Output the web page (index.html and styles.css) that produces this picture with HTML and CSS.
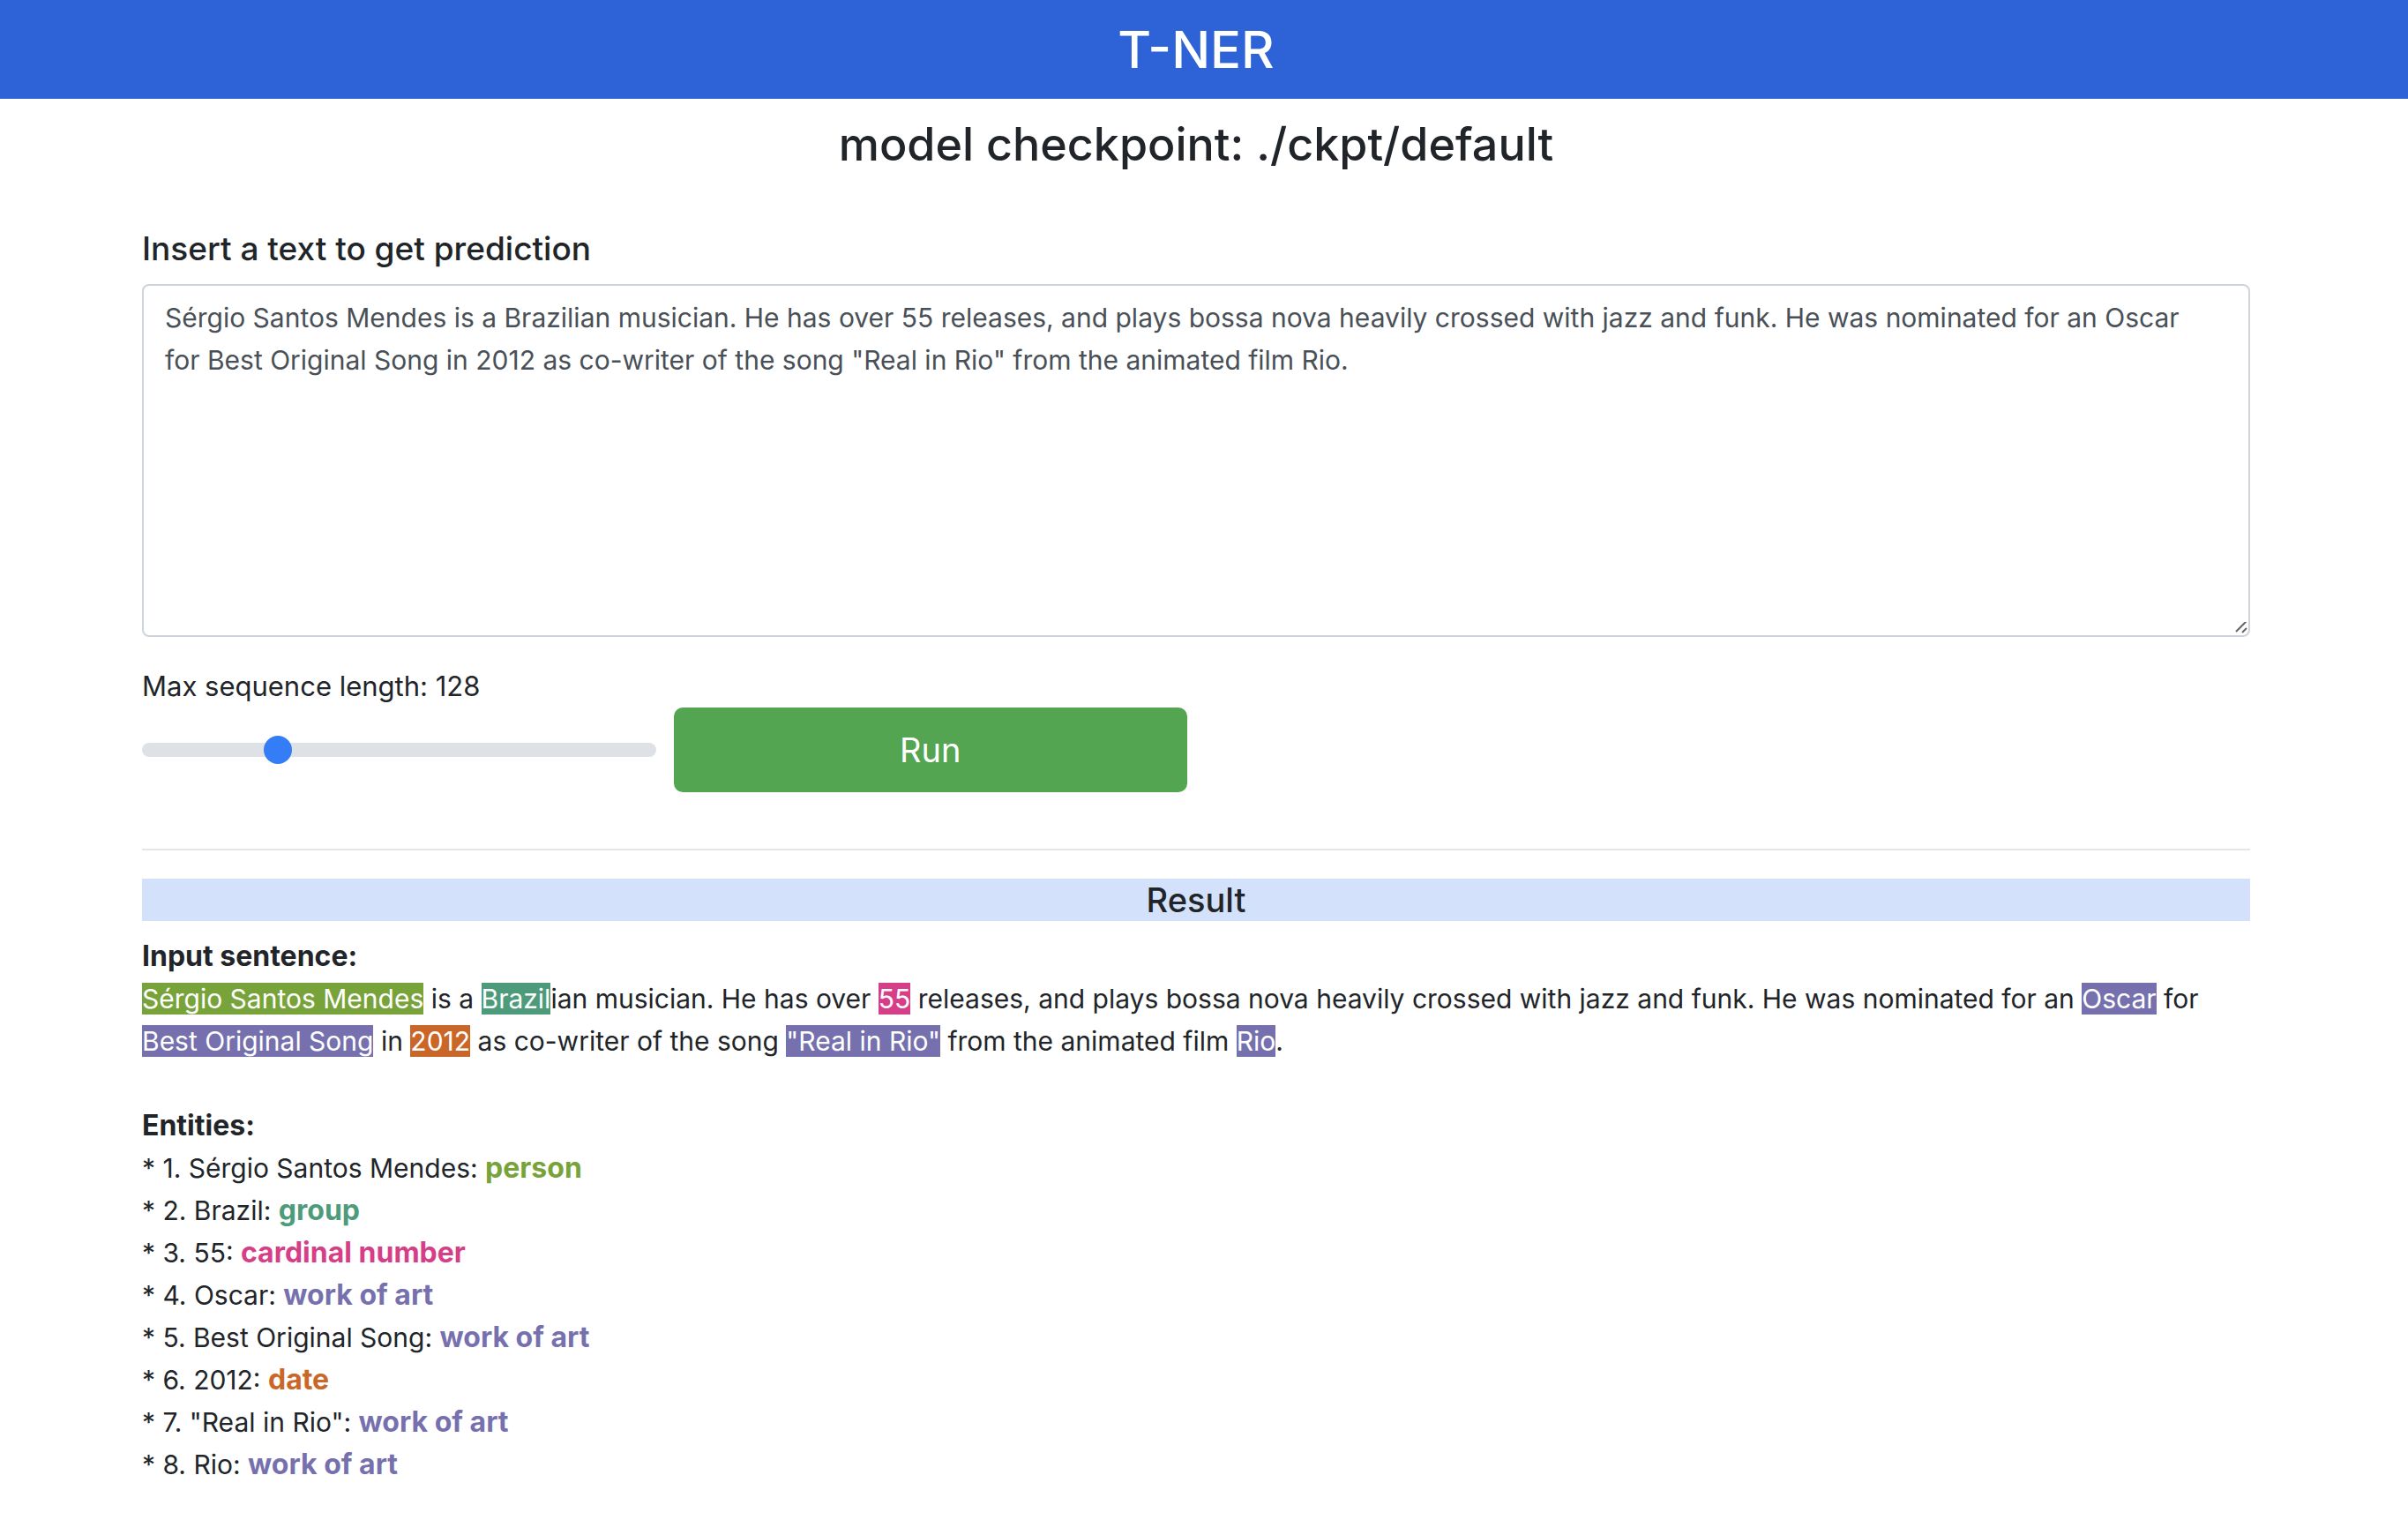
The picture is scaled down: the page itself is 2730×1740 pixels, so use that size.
FILE: index.html
```html
<!DOCTYPE html>
<html lang="en">
<head>
<meta charset="utf-8">
<meta name="viewport" content="width=device-width, initial-scale=1">
<title>T-NER</title>
<link rel="stylesheet" href="styles.css">
</head>
<body>
<header class="banner">
  <h1 class="banner-title">T-NER</h1>
</header>
<main class="page">
  <h2 class="checkpoint">model checkpoint: ./ckpt/default</h2>

  <form class="predict">
    <label class="field-title" for="input-text">Insert a text to get prediction</label>
    <textarea class="text-input" id="input-text" spellcheck="false">Sérgio Santos Mendes is a Brazilian musician. He has over 55 releases, and plays bossa nova heavily crossed with jazz and funk. He was nominated for an Oscar for Best Original Song in 2012 as co-writer of the song "Real in Rio" from the animated film Rio.</textarea>
    <label class="range-label" for="max-len">Max sequence length: 128</label>
    <div class="controls">
      <input class="range" type="range" id="max-len" min="0" max="512" value="128">
      <button class="run" type="button">Run</button>
    </div>
  </form>

  <hr class="divider">

  <section class="result">
    <h3 class="result-title">Result</h3>
    <h4 class="subhead">Input sentence:</h4>
    <p class="sentence"><mark class="tag person">Sérgio Santos Mendes</mark> is a <mark class="tag group">Brazil</mark>ian musician. He has over <mark class="tag cardinal">55</mark> releases, and plays bossa nova heavily crossed with jazz and funk. He was nominated for an <mark class="tag art">Oscar</mark> for <mark class="tag art">Best Original Song</mark> in <mark class="tag date">2012</mark> as co-writer of the song <mark class="tag art">"Real in Rio"</mark> from the animated film <mark class="tag art">Rio</mark>.</p>
    <h4 class="subhead">Entities:</h4>
    <ul class="entities">
      <li>* 1. Sérgio Santos Mendes: <b class="kind person">person</b></li>
      <li>* 2. Brazil: <b class="kind group">group</b></li>
      <li>* 3. 55: <b class="kind cardinal">cardinal number</b></li>
      <li>* 4. Oscar: <b class="kind art">work of art</b></li>
      <li>* 5. Best Original Song: <b class="kind art">work of art</b></li>
      <li>* 6. 2012: <b class="kind date">date</b></li>
      <li>* 7. "Real in Rio": <b class="kind art">work of art</b></li>
      <li>* 8. Rio: <b class="kind art">work of art</b></li>
    </ul>
  </section>
</main>
</body>
</html>
```

FILE: styles.css
```css
*, *::before, *::after { box-sizing: border-box; }

body {
  margin: 0;
  background: #fff;
  color: #212529;
  font-family: Inter, "Liberation Sans", sans-serif;
  font-size: 30px;
  line-height: 48px;
}

h1, h2, h3, h4, p, ul { margin: 0; padding: 0; }

.banner {
  padding: 20px 179px 20px 161px;
  background: #2d63d6;
  color: #fff;
  text-align: center;
}

.banner-title { font-size: 58px; font-weight: 500; line-height: 72px; }

.page { padding: 18px 179px 48px 161px; }

.checkpoint {
  margin-bottom: 60px;
  font-size: 52px;
  font-weight: 500;
  line-height: 68px;
  text-align: center;
}

.predict { display: flex; flex-direction: column; }

.field-title { margin-bottom: 16px; font-size: 37px; font-weight: 500; }

.text-input {
  height: 400px;
  margin-bottom: 32px;
  padding: 12px 48px 12px 24px;
  border: 2px solid #ced4da;
  border-radius: 8px;
  background: #fff;
  color: #495057;
  font: inherit;
  resize: vertical;
  outline: 0;
}

.text-input::-webkit-scrollbar { width: 20px; height: 20px; }

.text-input::-webkit-resizer {
  background: url("data:image/svg+xml,%3Csvg xmlns='http://www.w3.org/2000/svg' viewBox='0 0 20 20'%3E%3Cpath d='M6 16L18 4M13 17L18 12' stroke='%23666' stroke-width='2' fill='none'/%3E%3C/svg%3E") no-repeat right bottom / 20px 20px;
}

.range-label { font-size: 31px; }

.controls {
  display: grid;
  grid-template-columns: repeat(4, 1fr);
  gap: 20px;
  align-items: center;
}

.range {
  width: 100%;
  height: 32px;
  margin: 0;
  appearance: none;
  background: transparent;
}

.range::-webkit-slider-runnable-track {
  height: 16px;
  border-radius: 8px;
  background: #dee2e6;
}

.range::-webkit-slider-thumb {
  width: 32px;
  height: 32px;
  margin-top: -8px;
  appearance: none;
  border-radius: 50%;
  background: #347df6;
}

.run {
  height: 96px;
  border: 0;
  border-radius: 10px;
  background: #53a551;
  color: #fff;
  font: inherit;
  font-size: 38px;
}

.divider {
  height: 2px;
  margin: 64px 0 32px;
  border: 0;
  background: #e5e5e5;
}

.result-title {
  margin-bottom: 16px;
  background: #d4e1fb;
  font-size: 38px;
  font-weight: 500;
  text-align: center;
}

.subhead { font-size: 32px; font-weight: 700; }

.sentence { margin-bottom: 48px; }

.tag { color: #fff; }
.tag.person { background: #78a33a; }
.tag.group { background: #4d9b7a; }
.tag.cardinal { background: #d63f88; }
.tag.art { background: #7671ae; }
.tag.date { background: #ca6728; }

.entities { list-style: none; }
.entities li { height: 48px; }

.kind { font-size: 32px; font-weight: 700; }
.kind.person { color: #78a33a; }
.kind.group { color: #4d9b7a; }
.kind.cardinal { color: #d63f88; }
.kind.art { color: #7671ae; }
.kind.date { color: #ca6728; }
```
